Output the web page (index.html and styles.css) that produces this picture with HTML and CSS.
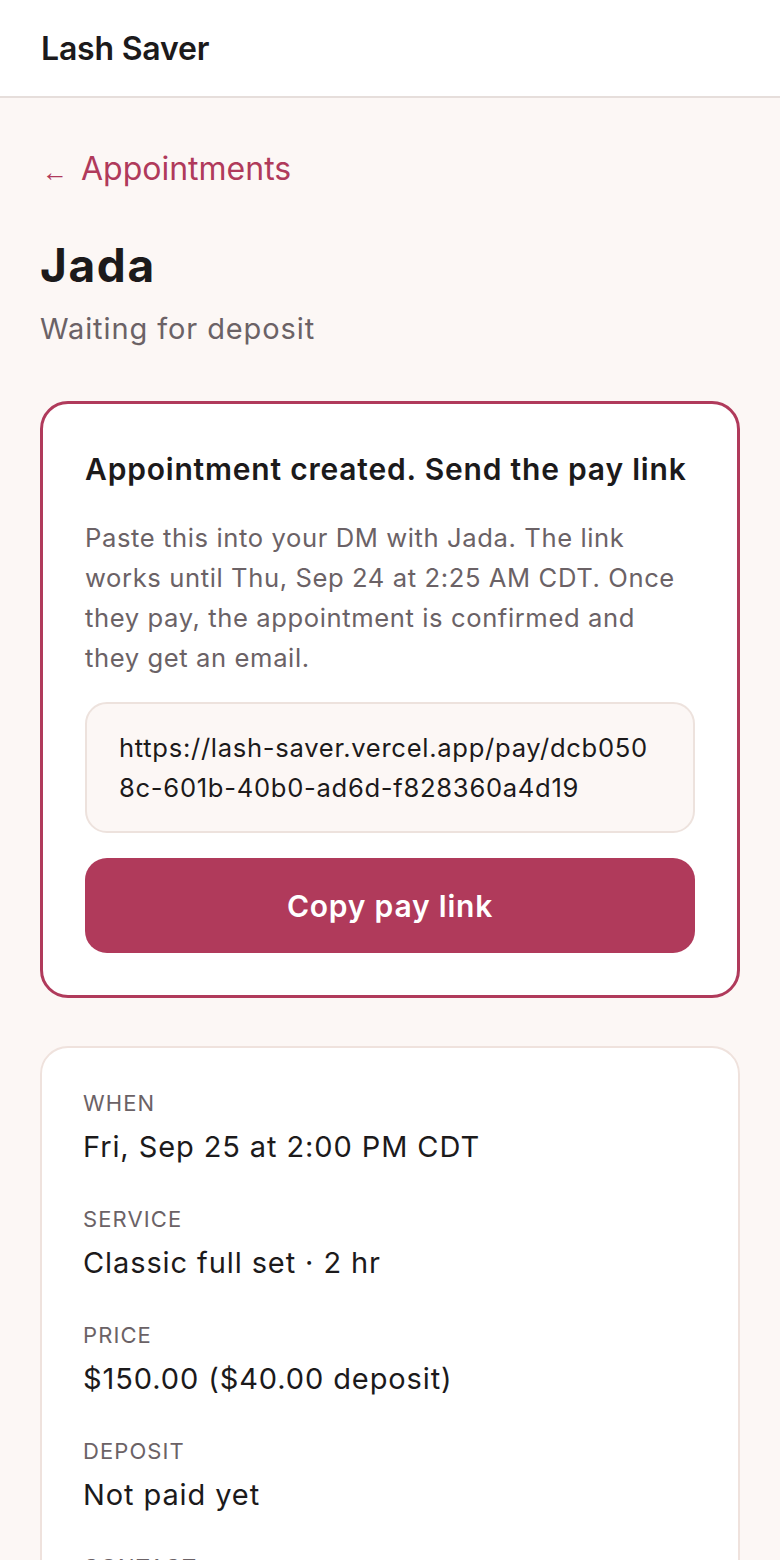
FILE: index.html
```html
<!DOCTYPE html>
<html lang="en">
<head>
    <meta charset="UTF-8">
    <meta name="viewport" content="width=device-width, initial-scale=1.0">
    <title>Jada - Lash Saver</title>
    <link rel="stylesheet" href="styles.css">
</head>
<body>
    <header class="topbar">
        <span class="brand">Lash Saver</span>
    </header>

    <main class="page">
        <a class="back-link" href="#"><span class="arrow">&larr;</span> Appointments</a>
        <h1 class="client-name">Jada</h1>
        <p class="status">Waiting for deposit</p>

        <section class="card card-accent">
            <h2 class="card-title">Appointment created. Send the pay link</h2>
            <p class="card-note">Paste this into your DM with Jada. The link works until Thu, Sep 24 at 2:25 AM CDT. Once they pay, the appointment is confirmed and they get an email.</p>
            <div class="link-box">https://lash-saver.vercel.app/pay/dcb0508c-601b-40b0-ad6d-f828360a4d19</div>
            <button class="copy-btn" type="button">Copy pay link</button>
        </section>

        <section class="card">
            <dl class="details">
                <div class="detail-row">
                    <dt>When</dt>
                    <dd>Fri, Sep 25 at 2:00 PM CDT</dd>
                </div>
                <div class="detail-row">
                    <dt>Service</dt>
                    <dd>Classic full set &middot; 2 hr</dd>
                </div>
                <div class="detail-row">
                    <dt>Price</dt>
                    <dd>$150.00 ($40.00 deposit)</dd>
                </div>
                <div class="detail-row">
                    <dt>Deposit</dt>
                    <dd>Not paid yet</dd>
                </div>
                <div class="detail-row">
                    <dt>Contact</dt>
                    <dd>@jada.lashes</dd>
                </div>
            </dl>
        </section>
    </main>
</body>
</html>
```

FILE: styles.css
```css
body {
    margin: 0;
    font-family: Inter, "Noto Sans", sans-serif;
    background-color: #fcf7f5;
    color: #1c1a1b;
}
.topbar {
    height: 96px;
    display: flex;
    align-items: center;
    padding: 0 41px;
    background-color: #fff;
    border-bottom: 2px solid #e6dedb;
}
.brand {
    font-size: 32px;
    font-weight: 600;
    letter-spacing: -0.2px;
}
.page {
    padding: 51px 40px 40px;
}
.back-link {
    display: block;
    font-size: 32px;
    line-height: 40px;
    color: #b03a5b;
    text-decoration: none;
}
.arrow {
    display: inline-block;
    width: 30px;
    padding-left: 2px;
    font-family: "Liberation Sans", sans-serif;
    font-size: 26px;
    vertical-align: -1px;
}
.client-name {
    margin: 47px 0 0;
    font-size: 46px;
    line-height: 53px;
    font-weight: 700;
    letter-spacing: 1.6px;
}
.status {
    margin: 17px 0 0;
    font-size: 29px;
    line-height: 40px;
    letter-spacing: 0.9px;
    color: #6b6266;
}
.card {
    margin-top: 48px;
    background-color: #fff;
    border: 2px solid #efe2dd;
    border-radius: 28px;
    padding: 41px;
}
.card-accent {
    margin-top: 52px;
    border: 3px solid #b03a5b;
    padding: 46px 42px 42px;
}
.card-title {
    margin: 0;
    font-size: 30px;
    line-height: 38px;
    font-weight: 600;
    letter-spacing: 0.8px;
}
.card-note {
    margin: 30px 0 0;
    padding-right: 6px;
    font-size: 25.6px;
    line-height: 40px;
    letter-spacing: 0.6px;
    color: #6b6266;
}
.link-box {
    margin-top: 24px;
    padding: 24px 30px 23px 32px;
    font-size: 25.6px;
    line-height: 40px;
    letter-spacing: 0.7px;
    background-color: #fcf7f5;
    border: 2px solid #ede2dd;
    border-radius: 22px;
    word-break: break-all;
}
.copy-btn {
    display: block;
    width: 100%;
    height: 95px;
    margin-top: 25px;
    border: none;
    border-radius: 22px;
    background-color: #b03a5b;
    color: #fff;
    font-family: inherit;
    font-size: 30px;
    font-weight: 600;
    letter-spacing: 0.8px;
    cursor: pointer;
}
.details {
    margin: 0;
    display: flex;
    flex-direction: column;
    gap: 38px;
}
.detail-row dt {
    font-size: 22px;
    line-height: 28px;
    text-transform: uppercase;
    letter-spacing: 1.1px;
    color: #6b6266;
}
.detail-row dd {
    margin: 10px 0 0;
    font-size: 29px;
    line-height: 40px;
    letter-spacing: 0.9px;
}
```
